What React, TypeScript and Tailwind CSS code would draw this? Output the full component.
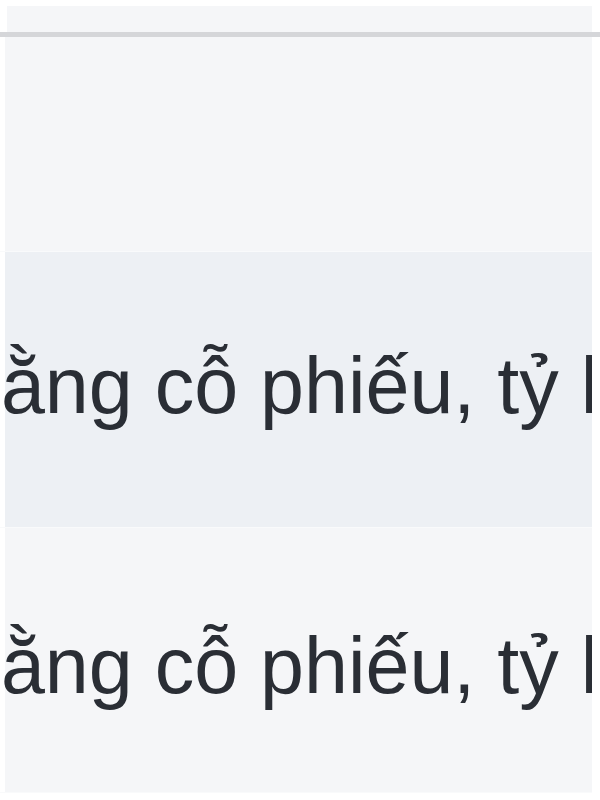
const rows = [
  { id: 1, text: "", highlight: false, height: "h-[215px]", pad: "" },
  { id: 2, text: "bằng cỗ phiếu, tỷ lệ", highlight: true, height: "h-[276px]", pad: "pt-[94px]" },
  { id: 3, text: "bằng cỗ phiếu, tỷ lệ", highlight: false, height: "h-[265px]", pad: "pt-[98px]" },
];

export default function App() {
  return (
    <div className="w-[600px] h-[800px] bg-white overflow-hidden pt-[6px] font-['Liberation_Sans',Arial,sans-serif]">
      {/* table header strip */}
      <div className="h-[26px] ml-[7px] mr-[8px] bg-[#f5f6f8]" />
      <div className="h-[5px] bg-[#d5d6d9]" />

      {/* body rows */}
      <div className="mr-[8px]">
        {rows.map((row) => (
          <div
            key={row.id}
            className={`${row.height} ${row.pad} ${
              row.highlight ? "bg-[#edf0f4]" : "bg-[#f5f6f8]"
            } overflow-hidden shadow-[inset_5px_0_0_#ffffff] border-b border-[#f9fafb]`}
          >
            {row.text && (
              <p className="ml-[-43px] whitespace-nowrap text-[79px] leading-[79px] text-[#2a2e35]">
                {row.text}
              </p>
            )}
          </div>
        ))}
      </div>
    </div>
  );
}
